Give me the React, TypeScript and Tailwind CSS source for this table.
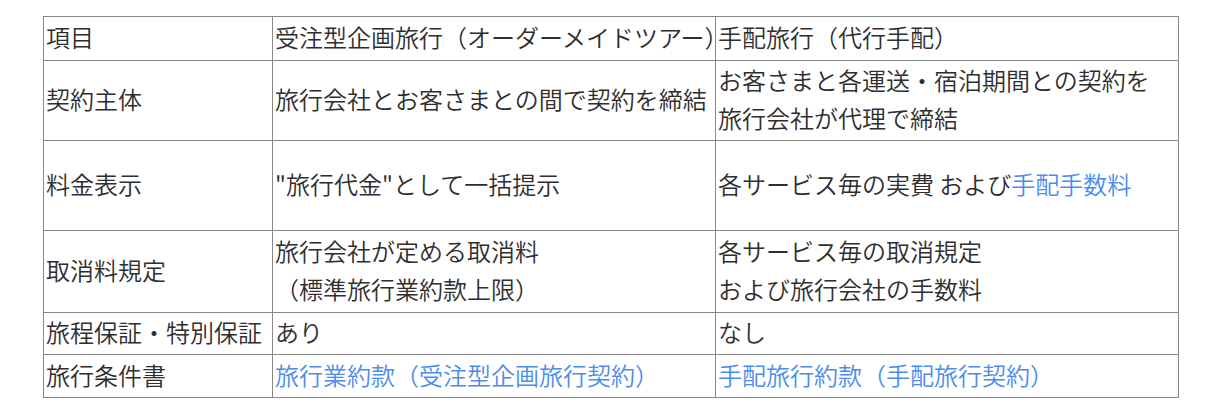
const rows: { label: string; a: React.ReactNode; b: React.ReactNode; h: string }[] = [
  {
    label: '項目',
    a: '受注型企画旅行（オーダーメイドツアー）',
    b: '手配旅行（代行手配）',
    h: 'h-[44px]',
  },
  {
    label: '契約主体',
    a: '旅行会社とお客さまとの間で契約を締結',
    b: (
      <>
        お客さまと各運送・宿泊期間との契約を
        <br />
        旅行会社が代理で締結
      </>
    ),
    h: 'h-[80px]',
  },
  {
    label: '料金表示',
    a: '"旅行代金"として一括提示',
    b: (
      <>
        各サービス毎の実費 および<span className="text-[#4a8cf0]">手配手数料</span>
      </>
    ),
    h: 'h-[90px]',
  },
  {
    label: '取消料規定',
    a: (
      <>
        旅行会社が定める取消料
        <br />
        （標準旅行業約款上限）
      </>
    ),
    b: (
      <>
        各サービス毎の取消規定
        <br />
        および旅行会社の手数料
      </>
    ),
    h: 'h-[82px]',
  },
  {
    label: '旅程保証・特別保証',
    a: 'あり',
    b: 'なし',
    h: 'h-[42px]',
  },
  {
    label: '旅行条件書',
    a: <span className="text-[#4a8cf0]">旅行業約款（受注型企画旅行契約）</span>,
    b: <span className="text-[#4a8cf0]">手配旅行約款（手配旅行契約）</span>,
    h: 'h-[43px]',
  },
];

export default function App() {
  // 罫線はグレー、文字は縦中央
  const cell = 'border border-[#888888] px-[2px] pt-0 pb-[3px] align-middle';

  return (
    <div className="min-h-[420px] bg-white pl-[43px] pt-[16px] font-['Noto_Sans_CJK_JP',sans-serif] text-[24px] font-[350] leading-[38px] text-[#2e2e2e]">
      <table className="w-[1135px] table-fixed border-collapse">
        <colgroup>
          <col className="w-[229px]" />
          <col className="w-[443px]" />
          <col className="w-[463px]" />
        </colgroup>
        <tbody>
          {rows.map((r) => (
            <tr key={r.label} className={r.h}>
              <td className={cell}>{r.label}</td>
              <td className={`${cell} whitespace-nowrap`}>{r.a}</td>
              <td className={`${cell} whitespace-nowrap`}>{r.b}</td>
            </tr>
          ))}
        </tbody>
      </table>
    </div>
  );
}
